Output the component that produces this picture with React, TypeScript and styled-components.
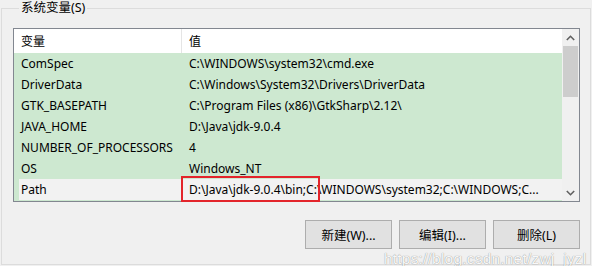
import React from 'react';
import styled, { createGlobalStyle } from 'styled-components';

const GlobalStyle = createGlobalStyle`
  html, body {
    margin: 0;
    padding: 0;
    background: #f0f0f0;
  }
  body {
    width: 592px;
    height: 266px;
    overflow: hidden;
    font-family: 'Noto Sans', 'Noto Sans CJK SC', sans-serif;
    font-size: 12px;
    color: #000;
  }
`;

const GroupBox = styled.fieldset`
  position: relative;
  box-sizing: border-box;
  width: 590px;
  height: 265px;
  margin: 0 0 0 1px;
  padding: 12px 10px 0 11px;
  border: 1px solid #dcdcdc;
  display: flex;
  flex-direction: column;
`;

const Legend = styled.legend`
  margin-left: 6px;
  padding: 0 2px;
  line-height: 16px;
  font-size: 12.5px;
  color: #000;
`;

const ListBox = styled.div`
  position: relative;
  box-sizing: border-box;
  width: 567px;
  height: 174px;
  border: 1px solid #828790;
  background: #cde8d0;
  display: flex;
`;

const Table = styled.div`
  flex: 1;
  display: flex;
  flex-direction: column;
`;

const HeaderRow = styled.div`
  height: 24px;
  background: #ffffff;
  display: grid;
  grid-template-columns: 168px 1fr;
  align-items: center;
`;

const HeaderCell = styled.div<{ $divider?: boolean }>`
  height: 100%;
  display: flex;
  align-items: center;
  padding-left: 7px;
  border-right: ${p => (p.$divider ? '1px solid #e5e5e5' : 'none')};
`;

const Row = styled.div<{ $selected?: boolean }>`
  height: 21px;
  display: grid;
  grid-template-columns: ${p => (p.$selected ? '163px' : '168px')} 1fr;
  align-items: center;
  margin-left: ${p => (p.$selected ? '5px' : '0')};
  background: ${p => (p.$selected ? '#f2f2f2' : 'transparent')};
`;

const Cell = styled.div<{ $indent?: number }>`
  padding-left: ${p => p.$indent ?? 7}px;
  white-space: nowrap;
  overflow: hidden;
  line-height: 21px;
`;

const ScrollBar = styled.div`
  width: 17px;
  background: #f0f0f0;
  display: flex;
  flex-direction: column;
`;

const Arrow = styled.div`
  height: 17px;
  display: flex;
  align-items: center;
  justify-content: center;
`;

const Thumb = styled.div`
  height: 51px;
  margin: 0 1px;
  background: #cdcdcd;
`;

const Track = styled.div`
  flex: 1;
`;

const Highlight = styled.div`
  position: absolute;
  left: 167px;
  top: 147px;
  width: 139px;
  height: 26px;
  box-sizing: border-box;
  border: 2px solid #e3252b;
  pointer-events: none;
`;

const Buttons = styled.div`
  margin-top: 18px;
  width: 567px;
  display: flex;
  justify-content: flex-end;
  gap: 7px;
`;

const Button = styled.button`
  box-sizing: border-box;
  width: 87px;
  height: 29px;
  border: 1px solid #adadad;
  background: #e1e1e1;
  font-family: 'Noto Sans', 'Noto Sans CJK SC', sans-serif;
  font-size: 12.5px;
  color: #000;
  padding: 0;
`;

const Watermark = styled.div`
  position: absolute;
  left: 382px;
  top: 234px;
  font-family: 'Liberation Sans', Arial, sans-serif;
  font-size: 15.5px;
  color: rgba(255, 255, 255, 0.95);
  text-shadow: 0 0 1px rgba(0, 0, 0, 0.35), 0 0 1px rgba(0, 0, 0, 0.2);
  letter-spacing: 0.2px;
  pointer-events: none;
`;

const Chevron = ({ up }: { up?: boolean }) => (
  <svg width="9" height="6" viewBox="0 0 9 6">
    <polyline
      points={up ? '0.8,5 4.5,1.3 8.2,5' : '0.8,1 4.5,4.7 8.2,1'}
      fill="none"
      stroke="#606060"
      strokeWidth="1.6"
    />
  </svg>
);

const vars: [string, string][] = [
  ['ComSpec', 'C:\\WINDOWS\\system32\\cmd.exe'],
  ['DriverData', 'C:\\Windows\\System32\\Drivers\\DriverData'],
  ['GTK_BASEPATH', 'C:\\Program Files (x86)\\GtkSharp\\2.12\\'],
  ['JAVA_HOME', 'D:\\Java\\jdk-9.0.4'],
  ['NUMBER_OF_PROCESSORS', '4'],
  ['OS', 'Windows_NT'],
  ['Path', 'D:\\Java\\jdk-9.0.4\\bin;C:\\WINDOWS\\system32;C:\\WINDOWS;C...'],
];

export default function App() {
  return (
    <>
      <GlobalStyle />
      <GroupBox>
        <Legend>系统变量(S)</Legend>
        <ListBox>
          <Table>
            <HeaderRow>
              <HeaderCell $divider>变量</HeaderCell>
              <HeaderCell>值</HeaderCell>
            </HeaderRow>
            {vars.map(([name, value]) => {
              const selected = name === 'Path';
              return (
                <Row key={name} $selected={selected}>
                  <Cell $indent={selected ? 2 : 7}>{name}</Cell>
                  <Cell>{value}</Cell>
                </Row>
              );
            })}
          </Table>
          <ScrollBar>
            <Arrow>
              <Chevron up />
            </Arrow>
            <Thumb />
            <Track />
            <Arrow>
              <Chevron />
            </Arrow>
          </ScrollBar>
          <Highlight />
        </ListBox>
        <Buttons>
          <Button>新建(W)...</Button>
          <Button>编辑(I)...</Button>
          <Button>删除(L)</Button>
        </Buttons>
        <Watermark>https://blog.csdn.net/zwj_jyzl</Watermark>
      </GroupBox>
    </>
  );
}
